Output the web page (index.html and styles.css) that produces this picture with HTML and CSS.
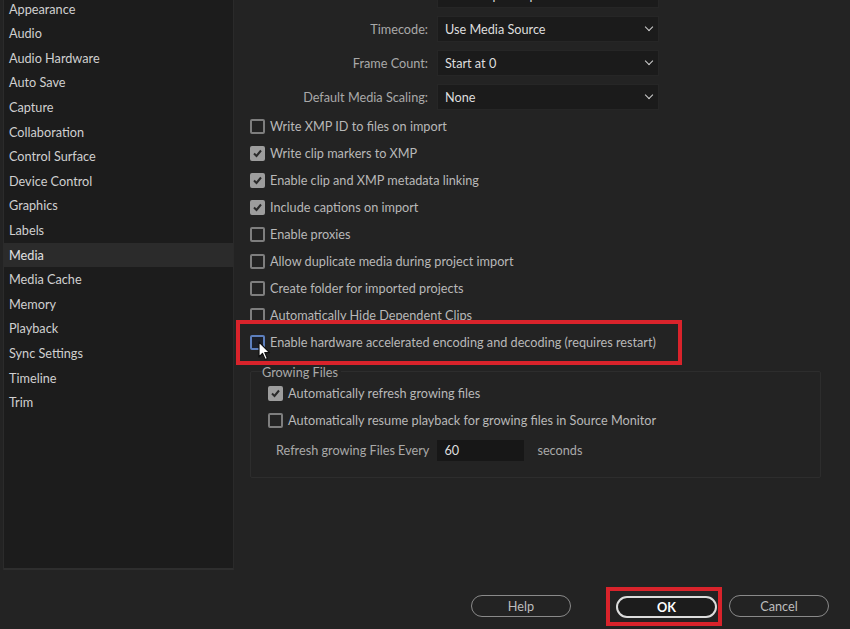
FILE: index.html
```html
<!DOCTYPE html>
<html lang="en">
<head>
    <meta charset="UTF-8">
    <title>Preferences - Media</title>
    <link rel="stylesheet" href="styles.css">
</head>
<body>
    <div class="dialog">
        <div class="panes">
            <!-- category list -->
            <ul class="categories">
                <li>Appearance</li>
                <li>Audio</li>
                <li>Audio Hardware</li>
                <li>Auto Save</li>
                <li>Capture</li>
                <li>Collaboration</li>
                <li>Control Surface</li>
                <li>Device Control</li>
                <li>Graphics</li>
                <li>Labels</li>
                <li class="selected">Media</li>
                <li>Media Cache</li>
                <li>Memory</li>
                <li>Playback</li>
                <li>Sync Settings</li>
                <li>Timeline</li>
                <li>Trim</li>
            </ul>

            <!-- media settings -->
            <div class="settings">
                <div class="fields">
                    <label>Indeterminate Media Timebase:</label>
                    <div class="select">23.976 fps Drop Frame<span class="chev"></span></div>
                    <label>Timecode:</label>
                    <div class="select">Use Media Source<span class="chev"></span></div>
                    <label>Frame Count:</label>
                    <div class="select">Start at 0<span class="chev"></span></div>
                    <label>Default Media Scaling:</label>
                    <div class="select">None<span class="chev"></span></div>
                </div>

                <div class="checks">
                    <div class="check"><span class="box"></span>Write XMP ID to files on import</div>
                    <div class="check"><span class="box on"></span>Write clip markers to XMP</div>
                    <div class="check"><span class="box on"></span>Enable clip and XMP metadata linking</div>
                    <div class="check"><span class="box on"></span>Include captions on import</div>
                    <div class="check"><span class="box"></span>Enable proxies</div>
                    <div class="check"><span class="box"></span>Allow duplicate media during project import</div>
                    <div class="check"><span class="box"></span>Create folder for imported projects</div>
                    <div class="check"><span class="box"></span>Automatically Hide Dependent Clips</div>
                    <div class="check marked">
                        <span class="box focus"></span>Enable hardware accelerated encoding and decoding (requires restart)
                        <span class="red-frame"></span>
                        <svg class="cursor" width="13" height="20" viewBox="0 0 13 20">
                            <path d="M1 1 L1 16 L4.5 12.5 L7.2 18.5 L9.4 17.5 L6.8 11.6 L11.5 11.6 Z" fill="#fff" stroke="#111" stroke-width="1.2" stroke-linejoin="round"/>
                        </svg>
                    </div>
                </div>

                <fieldset class="group">
                    <legend>Growing Files</legend>
                    <div class="check"><span class="box on"></span>Automatically refresh growing files</div>
                    <div class="check"><span class="box"></span>Automatically resume playback for growing files in Source Monitor</div>
                    <div class="refresh">
                        <span>Refresh growing Files Every</span>
                        <span class="num">60</span>
                        <span>seconds</span>
                    </div>
                </fieldset>
            </div>
        </div>

        <div class="footer">
            <button class="btn">Help</button>
            <span class="ok-frame"><button class="btn ok">OK</button></span>
            <button class="btn">Cancel</button>
        </div>
    </div>
</body>
</html>
```

FILE: styles.css
```css
body {
    margin: 0;
    background: #232323;
    font-family: Lato, "Open Sans", sans-serif;
    font-size: 12.7px;
    color: #bdbdbd;
    overflow: hidden;
}
.dialog {
    width: 850px;
    height: 629px;
    display: flex;
    flex-direction: column;
}
.panes {
    height: 572px;
    display: flex;
}
.categories {
    list-style: none;
    margin: 0 0 2px 4px;
    padding: 0;
    width: 229px;
    background: #1c1c1c;
    border-right: 1px solid #2a2a2a;
    border-bottom: 2px solid #2e2e2e;
    box-shadow: -1px 0 0 #2b2b2b;
    overflow: hidden;
}
.categories li {
    height: 24.6px;
    line-height: 24.6px;
    padding-left: 5px;
    color: #d0d0d0;
}
.categories li:first-child {
    margin-top: -3.3px;
}
.categories .selected {
    background: #2b2b2b;
    color: #e2e2e2;
}
.settings {
    flex: 1;
    padding-left: 16px;
}
.fields {
    display: grid;
    grid-template-columns: 178px 220px;
    grid-auto-rows: 34px;
    column-gap: 10px;
    align-items: center;
    margin-top: -22px;
}
.fields label {
    text-align: right;
    white-space: nowrap;
    color: #a9a9a9;
}
.select {
    position: relative;
    height: 24px;
    line-height: 24px;
    padding-left: 7px;
    background: #1b1b1b;
    box-shadow: 0 0 0 1px #262626;
    color: #dedede;
}
.chev {
    position: absolute;
    right: 6px;
    top: 7px;
    width: 5px;
    height: 5px;
    border-right: 1.5px solid #d0d0d0;
    border-bottom: 1.5px solid #d0d0d0;
    transform: rotate(45deg);
}
.checks {
    margin-top: -1.5px;
}
.check {
    display: flex;
    align-items: center;
    height: 27px;
    color: #b8b8b8;
    white-space: nowrap;
}
.box {
    box-sizing: border-box;
    width: 15px;
    height: 15px;
    margin-right: 5px;
    border: 2px solid #7e7e7e;
    border-radius: 2px;
    flex: none;
}
.box.on {
    border-color: #9d9d9d;
    background: #9d9d9d url("data:image/svg+xml;utf8,<svg xmlns='http://www.w3.org/2000/svg' width='11' height='11'><path d='M2 5.5 L4.5 8 L9 2.5' fill='none' stroke='%232a2a2a' stroke-width='2'/></svg>") center no-repeat;
}
.box.focus {
    border-color: #5d7fbd;
    background: #1b1f29;
}
.marked {
    position: relative;
}
.red-frame {
    position: absolute;
    left: -14px;
    top: -9px;
    width: 446px;
    height: 45px;
    box-sizing: border-box;
    border: 4px solid #d9232b;
}
.cursor {
    position: absolute;
    left: 8px;
    top: 12px;
}
.group {
    margin: 8px 0 0 0;
    padding: 0 0 12px 17px;
    width: 552px;
    border: 1px solid #2d2d2d;
    border-radius: 2px;
}
.group legend {
    padding: 0 3px 0 0;
    margin-left: -6px;
    line-height: 16px;
    color: #a9a9a9;
}
.refresh {
    display: flex;
    align-items: center;
    height: 30px;
    margin-top: 1.5px;
    padding-left: 8px;
    color: #a9a9a9;
}
.num {
    width: 80px;
    height: 21px;
    line-height: 21px;
    margin: 0 13px 0 8px;
    padding-left: 7px;
    background: #171717;
    color: #dedede;
}
.footer {
    flex: 1;
    display: flex;
    justify-content: flex-end;
    align-items: center;
    padding: 11px 21px 0 0;
}
.btn {
    width: 100px;
    height: 22px;
    border: 1.5px solid #8a8a8a;
    border-radius: 12px;
    background: transparent;
    color: #bdbdbd;
    font-family: Lato, "Open Sans", sans-serif;
    font-size: 12.7px;
    padding: 0;
}
.ok-frame {
    display: flex;
    margin: 0 7px 0 35px;
    padding: 5px 1px 4px 6px;
    border: 4px solid #d9232b;
}
.btn.ok {
    width: 101px;
    border: 2px solid #dcdcdc;
    background: #1c1c1c;
    color: #ffffff;
    font-weight: bold;
}
```
